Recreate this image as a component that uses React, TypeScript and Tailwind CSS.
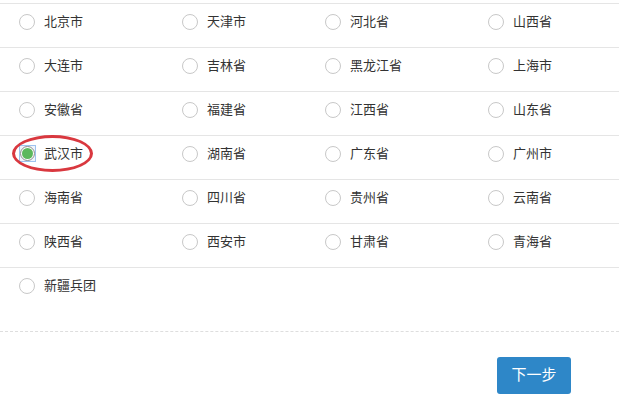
import React from "react";

const rows: string[][] = [
  ["北京市", "天津市", "河北省", "山西省"],
  ["大连市", "吉林省", "黑龙江省", "上海市"],
  ["安徽省", "福建省", "江西省", "山东省"],
  ["武汉市", "湖南省", "广东省", "广州市"],
  ["海南省", "四川省", "贵州省", "云南省"],
  ["陕西省", "西安市", "甘肃省", "青海省"],
  ["新疆兵团"],
];

function Radio({ checked }: { checked?: boolean }) {
  if (checked) {
    return (
      <span className="relative flex h-[17px] w-[17px] items-center justify-center border border-[#9ec3ef] bg-[#eef5fd]">
        <span className="flex h-[15px] w-[15px] items-center justify-center rounded-full border border-[#8c8c8c] bg-white">
          <span className="h-[11px] w-[11px] rounded-full bg-[#5cb85c]" />
        </span>
      </span>
    );
  }
  return <span className="block h-4 w-4 rounded-full border border-[#c8c8c8] bg-white" />;
}

export default function App() {
  return (
    <div
      className="w-[619px] h-[402px] bg-white text-[13px] text-[#333]"
      style={{ fontFamily: '"Liberation Sans", "Noto Sans CJK SC", sans-serif' }}
    >
      <div className="pt-[3px]">
        {rows.map((row, r) => (
          <div
            key={r}
            className="grid h-[44px] grid-cols-[163px_143px_163px_1fr] border-t border-[#e5e5e5] pl-[19px] pt-[9px]"
          >
            {row.map((name, c) => {
              const checked = r === 3 && c === 0;
              return (
                <label key={name} className="relative flex h-[17px] items-center">
                  <span className="flex w-[25px] items-center">
                    <Radio checked={checked} />
                  </span>
                  <span className="leading-none">{name}</span>
                  {checked && (
                    <span className="pointer-events-none absolute left-[-7px] top-[-10px] h-[37px] w-[81px] rounded-[50%] border-[3px] border-[#d9383f]" />
                  )}
                </label>
              );
            })}
          </div>
        ))}
      </div>
      <div className="mt-[20px] border-t border-dashed border-[#dedede]" />
      <div className="flex justify-end pr-[48px] pt-[25px]">
        <button className="h-[37px] w-[74px] rounded-[3px] bg-[#2e87c8] text-[15px] text-white">
          下一步
        </button>
      </div>
    </div>
  );
}
